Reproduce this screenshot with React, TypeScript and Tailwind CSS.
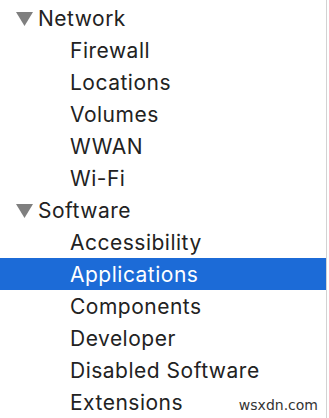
import React from "react";

type Row = { label: string; level: 0 | 1; selected?: boolean };

const rows: Row[] = [
  { label: "Network", level: 0 },
  { label: "Firewall", level: 1 },
  { label: "Locations", level: 1 },
  { label: "Volumes", level: 1 },
  { label: "WWAN", level: 1 },
  { label: "Wi-Fi", level: 1 },
  { label: "Software", level: 0 },
  { label: "Accessibility", level: 1 },
  { label: "Applications", level: 1, selected: true },
  { label: "Components", level: 1 },
  { label: "Developer", level: 1 },
  { label: "Disabled Software", level: 1 },
  { label: "Extensions", level: 1 },
];

export default function App() {
  return (
    <div className="relative w-[329px] h-[418px] overflow-hidden bg-white" style={{ fontFamily: "Inter, 'Noto Sans', sans-serif" }}>
      <div className="flex h-full">
        <div className="flex w-[326px] flex-col pt-[2px]">
          {rows.map((r) => (
            <div
              key={r.label}
              className={`flex h-[32px] shrink-0 items-center text-[21px] leading-none tracking-[0.5px] ${
                r.selected ? "bg-[#1c6bd7] text-white" : "text-[#222222]"
              } ${r.level === 0 ? "pl-[16px]" : "pl-[70px]"}`}
            >
              {r.level === 0 && (
                <svg width="17" height="14" viewBox="0 0 17 14" className="mr-[5px] mt-[1px]">
                  <polygon points="0,0 17,0 8.5,14" fill="#7f7f7f" />
                </svg>
              )}
              <span>{r.label}</span>
            </div>
          ))}
        </div>
        <div className="w-[1px] bg-[#d2d2d2]" />
        <div className="flex-1 bg-white" />
      </div>
      <div className="absolute bottom-[2px] right-[11px] text-[14px] text-[#333]" style={{ fontFamily: "'DejaVu Sans', sans-serif" }}>
        wsxdn.com
      </div>
    </div>
  );
}
